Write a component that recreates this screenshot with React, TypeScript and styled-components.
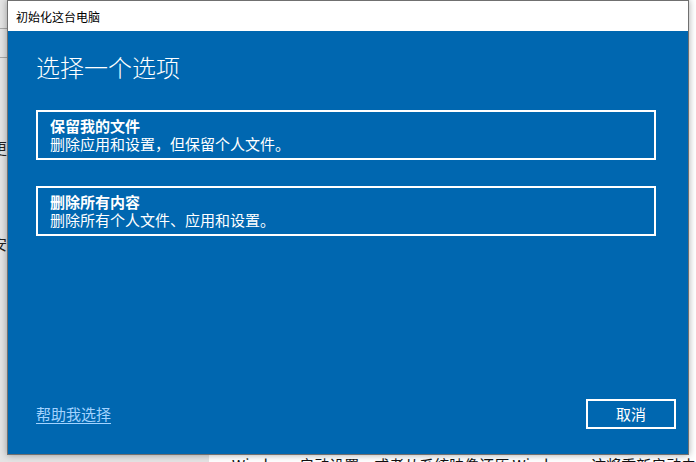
import styled, { createGlobalStyle } from 'styled-components'

const GlobalStyle = createGlobalStyle`
    html, body {
        margin: 0;
        padding: 0;
        overflow: hidden;
    }
    body {
        font-family: "Noto Sans CJK SC", "Microsoft YaHei", sans-serif;
    }
`

const Desktop = styled.div`
    position: relative;
    width: 696px;
    height: 462px;
    overflow: hidden;
    background: #ffffff;
`

// settings window behind the dialog
const BackWindow = styled.div`
    display: flex;
    height: 100%;
`

const Sidebar = styled.div`
    width: 209px;
    flex-shrink: 0;
    background: #e4e4e4;
    display: flex;
    flex-direction: column;
    padding-top: 0;
`

const SideRow = styled.div<{ $line?: boolean }>`
    height: 28px;
    border-bottom: 1px solid ${(p) => (p.$line ? '#a8a8a8' : 'transparent')};
`

const SideList = styled.div`
    display: flex;
    flex-direction: column;
    padding-top: 42px;
`

const SideItem = styled.div`
    height: 96px;
    margin-left: -8px;
    font-size: 15px;
    line-height: 20px;
    color: #222;
    display: flex;
    align-items: center;
`

const BackContent = styled.div`
    flex: 1;
    padding: 455px 0 0 23px;
    font-size: 15px;
    line-height: 20px;
    color: #111;
    white-space: nowrap;
`

const Dialog = styled.div`
    position: absolute;
    left: 7px;
    top: 0;
    width: 680px;
    height: 453px;
    border: 1px solid #707070;
    display: flex;
    flex-direction: column;
    box-shadow: 0 0 7px rgba(0, 0, 0, 0.35);
`

const TitleBar = styled.div`
    height: 30px;
    flex-shrink: 0;
    background: #ffffff;
    display: flex;
    align-items: center;
    padding-left: 8px;
    font-size: 12px;
    color: #000;
`

const Body = styled.div`
    flex: 1;
    background: #0067b0;
    color: #ffffff;
    display: flex;
    flex-direction: column;
    padding: 20px 12px 25px 28px;
`

const Heading = styled.h1`
    margin: 0 0 27px;
    font-size: 24px;
    font-weight: 300;
    line-height: 32px;
`

const Options = styled.div`
    display: flex;
    flex-direction: column;
    gap: 26px;
    width: 620px;
`

const Option = styled.button`
    display: flex;
    flex-direction: column;
    align-items: flex-start;
    height: 50px;
    box-sizing: border-box;
    padding: 5px 12px;
    border: 2px solid #ffffff;
    background: transparent;
    color: #ffffff;
    font-family: inherit;
    font-size: 15px;
    line-height: 18px;
    text-align: left;
    cursor: pointer;
`

const OptionTitle = styled.span`
    font-weight: 700;
`

const OptionDesc = styled.span`
    font-weight: 400;
`

const Footer = styled.div`
    margin-top: auto;
    display: flex;
    justify-content: space-between;
    align-items: center;
`

const HelpLink = styled.a`
    font-size: 15px;
    line-height: 20px;
    color: #a3d3ff;
    text-decoration: underline;
    text-underline-offset: 3px;
    cursor: pointer;
`

const CancelButton = styled.button`
    width: 90px;
    height: 30px;
    border: 2px solid #ffffff;
    background: transparent;
    color: #ffffff;
    font-family: inherit;
    font-size: 15px;
    line-height: 20px;
    padding: 0;
    cursor: pointer;
`

const options = [
    { title: '保留我的文件', desc: '删除应用和设置，但保留个人文件。' },
    { title: '删除所有内容', desc: '删除所有个人文件、应用和设置。' }
]

export default function App() {
    return (
        <Desktop>
            <GlobalStyle />
            <BackWindow>
                <Sidebar>
                    <SideRow $line />
                    <SideRow $line />
                    <SideList>
                        <SideItem>更</SideItem>
                        <SideItem>安</SideItem>
                    </SideList>
                </Sidebar>
                <BackContent>Windows 启动设置，或者从系统映像还原 Windows。这将重新启动电脑。</BackContent>
            </BackWindow>

            <Dialog>
                <TitleBar>初始化这台电脑</TitleBar>
                <Body>
                    <Heading>选择一个选项</Heading>
                    <Options>
                        {options.map((o) => (
                            <Option key={o.title}>
                                <OptionTitle>{o.title}</OptionTitle>
                                <OptionDesc>{o.desc}</OptionDesc>
                            </Option>
                        ))}
                    </Options>
                    <Footer>
                        <HelpLink>帮助我选择</HelpLink>
                        <CancelButton>取消</CancelButton>
                    </Footer>
                </Body>
            </Dialog>
        </Desktop>
    )
}
